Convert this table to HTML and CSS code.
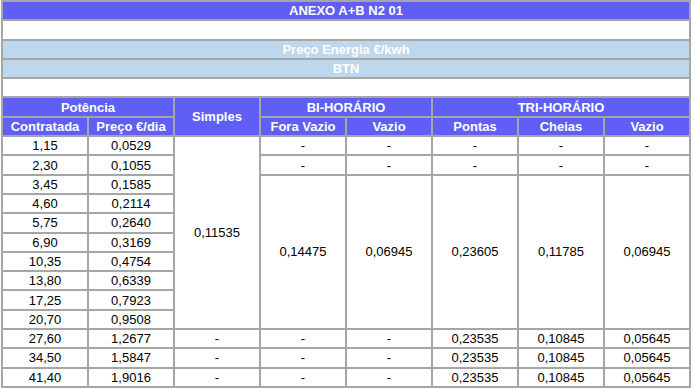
FILE: index.html
```html
<!DOCTYPE html>
<html>
<head>
<meta charset="utf-8">
<link rel="stylesheet" href="styles.css">
</head>
<body>
<table class="tariff">
  <colgroup>
    <col class="c"><col class="c"><col class="c"><col class="c"><col class="c"><col class="c"><col class="c"><col class="c">
  </colgroup>
  <tr><td colspan="8" class="hd">ANEXO A+B N2 01</td></tr>
  <tr><td colspan="8" class="blank"></td></tr>
  <tr><td colspan="8" class="lb">Preço Energia €/kwh</td></tr>
  <tr><td colspan="8" class="lb">BTN</td></tr>
  <tr><td colspan="8" class="blank"></td></tr>
  <tr>
    <td colspan="2" class="hd">Potência</td>
    <td rowspan="2" class="hd">Simples</td>
    <td colspan="2" class="hd">BI-HORÁRIO</td>
    <td colspan="3" class="hd">TRI-HORÁRIO</td>
  </tr>
  <tr>
    <td class="hd">Contratada</td>
    <td class="hd">Preço €/dia</td>
    <td class="hd">Fora Vazio</td>
    <td class="hd">Vazio</td>
    <td class="hd">Pontas</td>
    <td class="hd">Cheias</td>
    <td class="hd">Vazio</td>
  </tr>
  <tr><td>1,15</td><td>0,0529</td><td rowspan="10">0,11535</td><td>-</td><td>-</td><td>-</td><td>-</td><td>-</td></tr>
  <tr><td>2,30</td><td>0,1055</td><td>-</td><td>-</td><td>-</td><td>-</td><td>-</td></tr>
  <tr><td>3,45</td><td>0,1585</td><td rowspan="8">0,14475</td><td rowspan="8">0,06945</td><td rowspan="8">0,23605</td><td rowspan="8">0,11785</td><td rowspan="8">0,06945</td></tr>
  <tr><td>4,60</td><td>0,2114</td></tr>
  <tr><td>5,75</td><td>0,2640</td></tr>
  <tr><td>6,90</td><td>0,3169</td></tr>
  <tr><td>10,35</td><td>0,4754</td></tr>
  <tr><td>13,80</td><td>0,6339</td></tr>
  <tr><td>17,25</td><td>0,7923</td></tr>
  <tr><td>20,70</td><td>0,9508</td></tr>
  <tr><td>27,60</td><td>1,2677</td><td>-</td><td>-</td><td>-</td><td>0,23535</td><td>0,10845</td><td>0,05645</td></tr>
  <tr><td>34,50</td><td>1,5847</td><td>-</td><td>-</td><td>-</td><td>0,23535</td><td>0,10845</td><td>0,05645</td></tr>
  <tr><td>41,40</td><td>1,9016</td><td>-</td><td>-</td><td>-</td><td>0,23535</td><td>0,10845</td><td>0,05645</td></tr>
</table>
</body>
</html>
```
FILE: styles.css
```css
html, body {
  margin: 0;
  padding: 0;
  background: #ffffff;
}
.tariff {
  border-collapse: collapse;
  table-layout: fixed;
  width: 690px;
  margin: 0 0 0 1px;
  font-family: "Liberation Sans", Arial, sans-serif;
  font-size: 13px;
  color: #000;
}
.tariff .c {
  width: 86px;
}
.tariff td {
  border: 2px solid #a6a6a6;
  height: 17.3px;
  padding: 0;
  text-align: center;
  vertical-align: middle;
  line-height: 15px;
  white-space: nowrap;
}
.tariff td.hd {
  background: #5f5ff6;
  color: #ffffff;
  font-weight: bold;
}
.tariff td.lb {
  background: #bdd7ee;
  color: #ffffff;
  font-weight: bold;
}
.tariff td.blank {
  background: #ffffff;
}
```
